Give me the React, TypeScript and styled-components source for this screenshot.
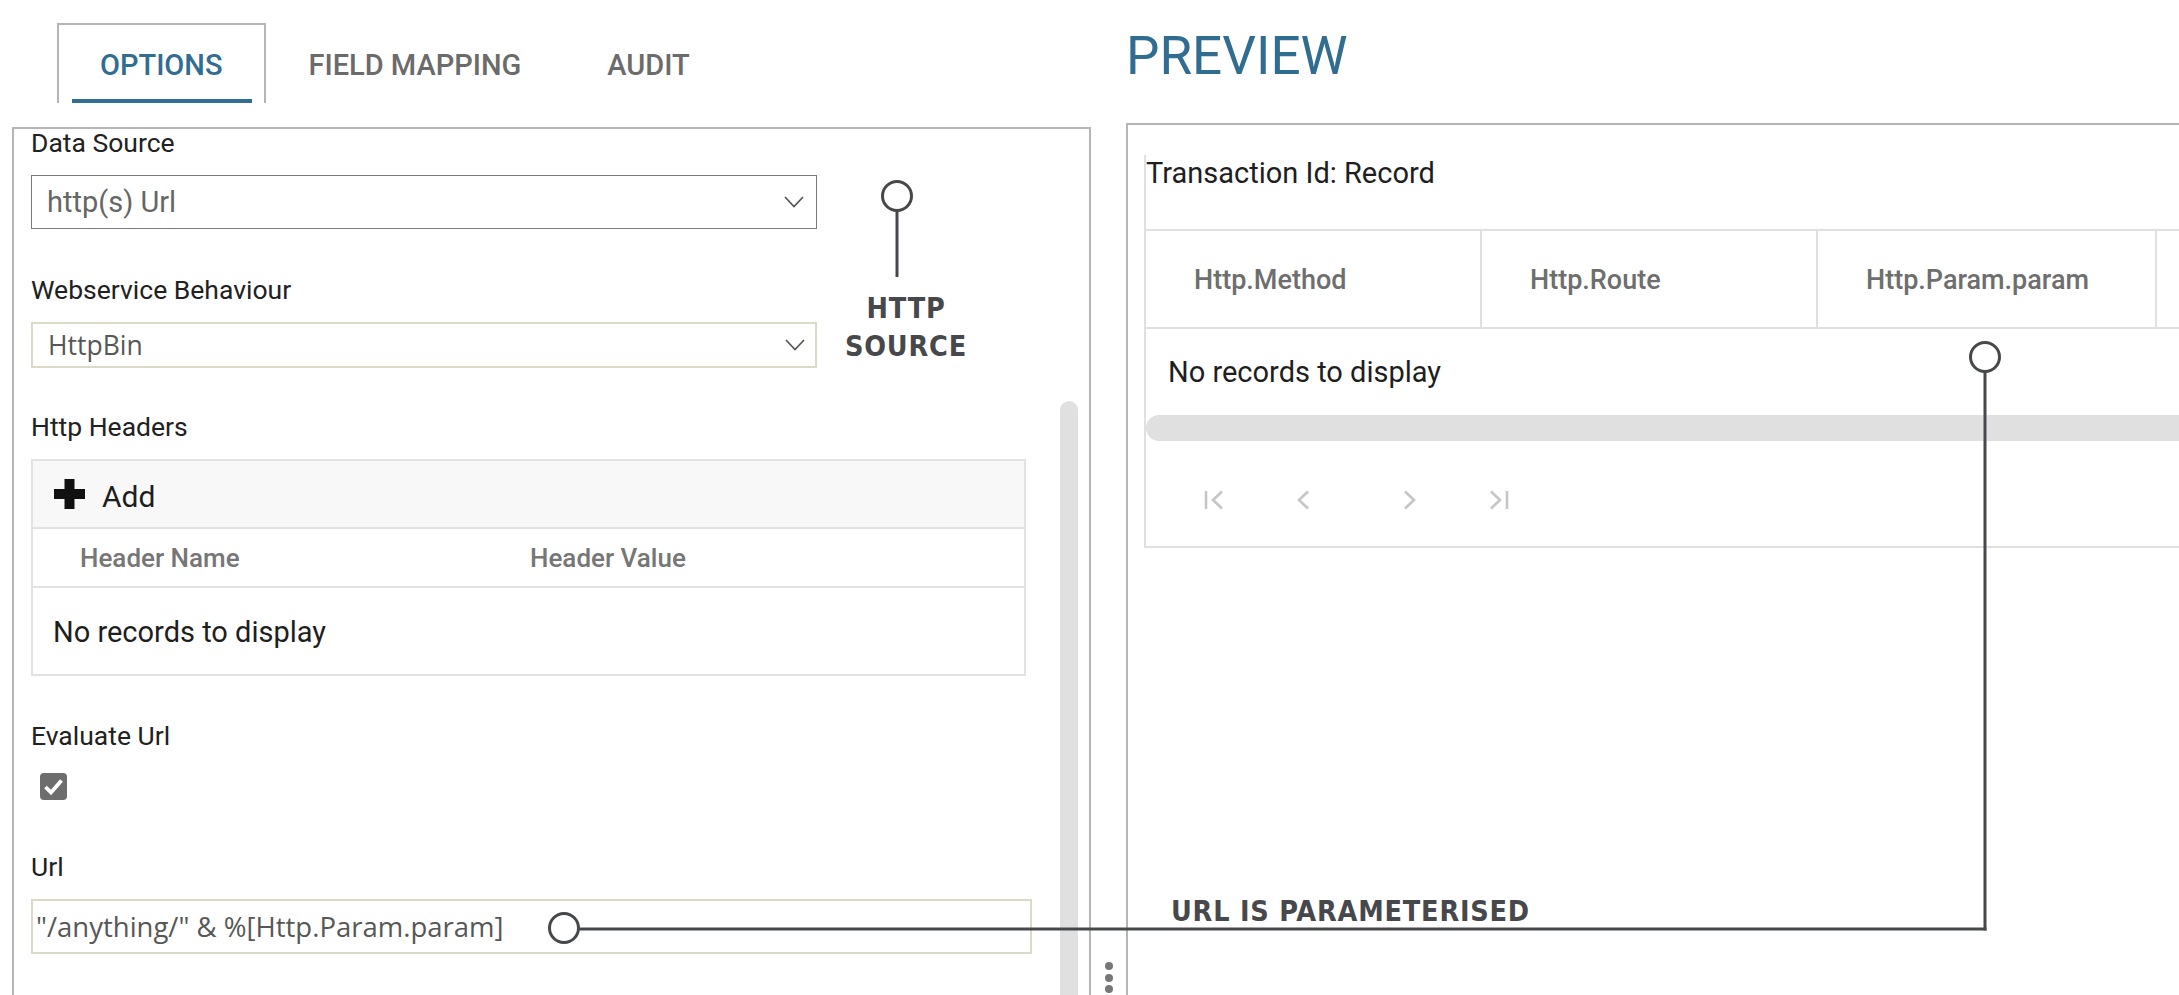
import React from 'react';
import styled, { createGlobalStyle } from 'styled-components';

const GlobalStyle = createGlobalStyle`
  html, body {
    margin: 0;
    padding: 0;
    background: #fff;
  }
  body {
    font-family: Roboto, "Liberation Sans", sans-serif;
    overflow: hidden;
  }
`;

const BLUE = '#306d90';
const INK = '#46484b';

const ChevronDown: React.FC = () => (
  <svg width="20" height="12" viewBox="0 0 20 12">
    <polyline points="1,1 10,10.5 19,1" fill="none" stroke="#555" strokeWidth="1.7" />
  </svg>
);

const PlusIcon: React.FC = () => (
  <svg width="31" height="30" viewBox="0 0 31 30">
    <rect x="10.5" y="0" width="10" height="30" fill="#111" />
    <rect x="0" y="10" width="31" height="10" fill="#111" />
  </svg>
);

const CheckIcon: React.FC = () => (
  <svg width="27" height="27" viewBox="0 0 27 27">
    <polyline points="5.5,14 11,19.5 21.5,7.5" fill="none" stroke="#fff" strokeWidth="3.8" />
  </svg>
);

type PagerKind = 'first' | 'prev' | 'next' | 'last';

const PagerIcon: React.FC<{ kind: PagerKind }> = ({ kind }) => {
  const stroke = { fill: 'none', stroke: '#c6c6c6', strokeWidth: 2.6 };
  return (
    <svg width="22" height="20" viewBox="0 0 22 20">
      {kind === 'first' && (
        <>
          <line x1="2" y1="1" x2="2" y2="19" {...stroke} />
          <polyline points="18,1.5 9,10 18,18.5" {...stroke} />
        </>
      )}
      {kind === 'prev' && <polyline points="16,1.5 7,10 16,18.5" {...stroke} />}
      {kind === 'next' && <polyline points="6,1.5 15,10 6,18.5" {...stroke} />}
      {kind === 'last' && (
        <>
          <polyline points="4,1.5 13,10 4,18.5" {...stroke} />
          <line x1="20" y1="1" x2="20" y2="19" {...stroke} />
        </>
      )}
    </svg>
  );
};

const previewColumns = [
  { title: 'Http.Method', width: 336 },
  { title: 'Http.Route', width: 336 },
  { title: 'Http.Param.param', width: 339 },
  { title: '', width: 336 },
];

const App: React.FC = () => {
  return (
    <>
      <GlobalStyle />
      <Page>
        <LeftColumn>
          <TabStrip>
            <Tab $active>OPTIONS</Tab>
            <Tab>FIELD MAPPING</Tab>
            <Tab>AUDIT</Tab>
          </TabStrip>
          <OptionsPanel>
            <FormArea>
              <FieldLabel>Data Source</FieldLabel>
              <SelectBox $gap={47}>
                <SelectValue>http(s) Url</SelectValue>
                <ChevronDown />
              </SelectBox>

              <FieldLabel>Webservice Behaviour</FieldLabel>
              <SelectBox $beige $gap={45}>
                <SelectValue $beige>HttpBin</SelectValue>
                <ChevronDown />
              </SelectBox>

              <FieldLabel>Http Headers</FieldLabel>
              <HeadersGrid>
                <GridToolbar>
                  <PlusIcon />
                  <ToolbarText>Add</ToolbarText>
                </GridToolbar>
                <HeadersHead>
                  <HeadersHeadCell>Header Name</HeadersHeadCell>
                  <HeadersHeadCell>Header Value</HeadersHeadCell>
                </HeadersHead>
                <HeadersEmpty>No records to display</HeadersEmpty>
              </HeadersGrid>

              <FieldLabel>Evaluate Url</FieldLabel>
              <CheckBox>
                <CheckIcon />
              </CheckBox>

              <FieldLabel>Url</FieldLabel>
              <UrlField>"/anything/" &amp; %[Http.Param.param]</UrlField>
            </FormArea>
            <ScrollTrack>
              <ScrollThumb />
            </ScrollTrack>
          </OptionsPanel>
        </LeftColumn>

        <Splitter>
          <SplitterDot />
          <SplitterDot />
          <SplitterDot />
        </Splitter>

        <RightColumn>
          <PreviewTitle>PREVIEW</PreviewTitle>
          <PreviewPanel>
            <ResultGrid>
              <GridCaption>Transaction Id: Record</GridCaption>
              <ResultHead>
                {previewColumns.map((c, i) => (
                  <ResultHeadCell key={i} $width={c.width}>
                    {c.title}
                  </ResultHeadCell>
                ))}
              </ResultHead>
              <ResultBody>
                <ResultEmpty>No records to display</ResultEmpty>
                <HScroll />
              </ResultBody>
              <Pager>
                <PagerButton><PagerIcon kind="first" /></PagerButton>
                <PagerButton><PagerIcon kind="prev" /></PagerButton>
                <PagerNumbers />
                <PagerButton><PagerIcon kind="next" /></PagerButton>
                <PagerButton><PagerIcon kind="last" /></PagerButton>
              </Pager>
            </ResultGrid>
          </PreviewPanel>
        </RightColumn>

        <Connectors width="2179" height="995" viewBox="0 0 2179 995">
          <g fill="none" stroke={INK} strokeWidth="3">
            <line x1="897" y1="211" x2="897" y2="277" />
            <line x1="1985" y1="371.5" x2="1985" y2="930.5" />
            <line x1="578.5" y1="929" x2="1986.5" y2="929" />
          </g>
          <g fill="#fff" stroke={INK} strokeWidth="3">
            <circle cx="897" cy="196" r="14.5" />
            <circle cx="1985" cy="357" r="14.5" />
            <circle cx="564" cy="928" r="14.5" />
          </g>
        </Connectors>
        <Callout $left={805} $top={290} $width={200} $center>
          HTTP
          <br />
          SOURCE
        </Callout>
        <Callout $left={1171} $top={893}>URL IS PARAMETERISED</Callout>
      </Page>
    </>
  );
};

const Page = styled.div`
  position: relative;
  display: flex;
  width: 2179px;
  height: 995px;
  overflow: hidden;
  background: #fff;
`;

const LeftColumn = styled.div`
  display: flex;
  flex-direction: column;
  flex-shrink: 0;
  width: 1079px;
  margin-left: 12px;
`;

const TabStrip = styled.div`
  display: flex;
  padding: 23px 0 0 45px;
`;

const Tab = styled.div<{ $active?: boolean }>`
  position: relative;
  box-sizing: border-box;
  height: 80px;
  padding: 23px 41px 0;
  border: 2px solid ${(p) => (p.$active ? '#b5b5b5' : 'transparent')};
  border-bottom: none;
  font-size: 29px;
  font-weight: 500;
  line-height: 34px;
  color: ${(p) => (p.$active ? BLUE : '#6b6b6b')};
  white-space: nowrap;

  &::after {
    content: '';
    display: ${(p) => (p.$active ? 'block' : 'none')};
    position: absolute;
    left: 13px;
    right: 12px;
    bottom: 0;
    height: 4px;
    background: ${BLUE};
  }
`;

const OptionsPanel = styled.div`
  display: flex;
  flex: 1;
  min-height: 0;
  margin-top: 24px;
  border: 2px solid #b5b5b5;
  border-bottom: none;
  overflow: hidden;
`;

const FormArea = styled.div`
  flex: 1;
  padding: 0 28px 0 17px;
`;

const FieldLabel = styled.div`
  font-size: 26.5px;
  line-height: 28px;
  color: #212121;
  margin-bottom: 18px;
`;

const SelectBox = styled.div<{ $beige?: boolean; $gap: number }>`
  box-sizing: border-box;
  display: flex;
  align-items: center;
  justify-content: space-between;
  width: 786px;
  height: ${(p) => (p.$beige ? 46 : 54)}px;
  padding: 0 ${(p) => (p.$beige ? 10 : 12)}px 0 15px;
  border: ${(p) => (p.$beige ? '2px solid #dcd9c7' : '1px solid #7b7b7b')};
  margin-bottom: ${(p) => p.$gap}px;
  background: #fff;
`;

const SelectValue = styled.span<{ $beige?: boolean }>`
  font-family: ${(p) => (p.$beige ? '"Open Sans", "DejaVu Sans", sans-serif' : 'Roboto, sans-serif')};
  font-size: ${(p) => (p.$beige ? 26.5 : 29)}px;
  line-height: ${(p) => (p.$beige ? 42 : 52)}px;
  color: ${(p) => (p.$beige ? '#575757' : '#666')};
`;

const HeadersGrid = styled.div`
  margin: 0 6px 46px 0;
  border: 2px solid #e2e2e2;
`;

const GridToolbar = styled.div`
  display: flex;
  align-items: center;
  gap: 17px;
  height: 66px;
  padding-left: 21px;
  background: #f8f8f8;
  border-bottom: 2px solid #e2e2e2;
`;

const ToolbarText = styled.span`
  margin-top: 6px;
  font-size: 30px;
  line-height: 30px;
  color: #1e1e1e;
`;

const HeadersHead = styled.div`
  display: grid;
  grid-template-columns: 450px 1fr;
  padding-top: 2px;
  border-bottom: 2px solid #e2e2e2;
`;

const HeadersHeadCell = styled.div`
  padding-left: 47px;
  font-size: 26px;
  font-weight: 500;
  line-height: 55px;
  color: #767676;
`;

const HeadersEmpty = styled.div`
  padding: 2px 0 0 20px;
  font-size: 29px;
  line-height: 84px;
  color: #1e1e1e;
`;

const CheckBox = styled.div`
  display: flex;
  width: 27px;
  height: 27px;
  margin: 23px 0 53px 9px;
  border-radius: 4px;
  background: #6d6d6d;
`;

const UrlField = styled.div`
  box-sizing: border-box;
  height: 55px;
  padding-left: 3px;
  border: 2px solid #dcd9c7;
  font-family: "Open Sans", "DejaVu Sans", sans-serif;
  font-size: 27.5px;
  line-height: 51px;
  color: #575757;
  white-space: nowrap;
`;

const ScrollTrack = styled.div`
  display: flex;
  flex-direction: column;
  flex-shrink: 0;
  width: 18px;
  margin-right: 11px;
  padding-top: 272px;
`;

const ScrollThumb = styled.div`
  flex: 1;
  border-radius: 9px 9px 0 0;
  background: #e0e0e0;
`;

const Splitter = styled.div`
  display: flex;
  flex-direction: column;
  justify-content: flex-end;
  align-items: center;
  gap: 3.5px;
  flex-shrink: 0;
  width: 35px;
  padding-bottom: 2px;
  box-sizing: border-box;
`;

const SplitterDot = styled.span`
  width: 8px;
  height: 8px;
  border-radius: 50%;
  background: #777;
`;

const RightColumn = styled.div`
  display: flex;
  flex-direction: column;
  flex: 1;
  min-width: 0;
  padding-top: 25px;
  overflow: hidden;
`;

const PreviewTitle = styled.h1`
  margin: 0;
  font-size: 53px;
  font-weight: 400;
  line-height: 62px;
  color: ${BLUE};
`;

const PreviewPanel = styled.div`
  flex: 1;
  margin: 36px -60px 0 0;
  padding: 30px 0 0 16px;
  border-top: 2px solid #b5b5b5;
  border-left: 2px solid #b5b5b5;
  overflow: hidden;
`;

const ResultGrid = styled.div`
  width: 1500px;
  border-left: 2px solid #e0e0e0;
  border-bottom: 2px solid #e0e0e0;
`;

const GridCaption = styled.div`
  padding-bottom: 38px;
  border-bottom: 2px solid #e0e0e0;
  font-size: 29px;
  line-height: 36px;
  color: #1e1e1e;
`;

const ResultHead = styled.div`
  display: flex;
  border-bottom: 2px solid #e0e0e0;
`;

const ResultHeadCell = styled.div<{ $width: number }>`
  box-sizing: border-box;
  flex-shrink: 0;
  width: ${(p) => p.$width}px;
  height: 96px;
  padding: 2px 0 0 48px;
  border-right: 2px solid #e0e0e0;
  font-size: 27px;
  font-weight: 500;
  line-height: 94px;
  color: #6e6e6e;
  white-space: nowrap;
`;

const ResultBody = styled.div`
  padding-top: 25px;
`;

const ResultEmpty = styled.div`
  padding-left: 22px;
  font-size: 29px;
  line-height: 36px;
  color: #1e1e1e;
`;

const HScroll = styled.div`
  height: 26px;
  margin-top: 25px;
  border-radius: 13px 0 0 13px;
  background: #e0e0e0;
`;

const Pager = styled.div`
  box-sizing: border-box;
  display: flex;
  align-items: center;
  height: 105px;
  padding: 13px 0 0 25px;
`;

const PagerButton = styled.div`
  display: flex;
  justify-content: center;
  width: 88px;
`;

const PagerNumbers = styled.div`
  width: 19px;
`;

const Connectors = styled.svg`
  position: absolute;
  left: 0;
  top: 0;
  pointer-events: none;
`;

const Callout = styled.div<{ $left: number; $top: number; $width?: number; $center?: boolean }>`
  position: absolute;
  left: ${(p) => p.$left}px;
  top: ${(p) => p.$top}px;
  ${(p) => (p.$width ? `width: ${p.$width}px;` : '')}
  text-align: ${(p) => (p.$center ? 'center' : 'left')};
  padding-left: ${(p) => (p.$center ? 1 : 0)}px;
  font-family: "Liberation Sans Narrow", "DejaVu Sans Condensed", "DejaVu Sans", sans-serif;
  font-stretch: condensed;
  font-size: 28.5px;
  font-weight: 700;
  line-height: 38px;
  letter-spacing: 0.8px;
  color: ${INK};
  white-space: nowrap;
`;

export default App;
